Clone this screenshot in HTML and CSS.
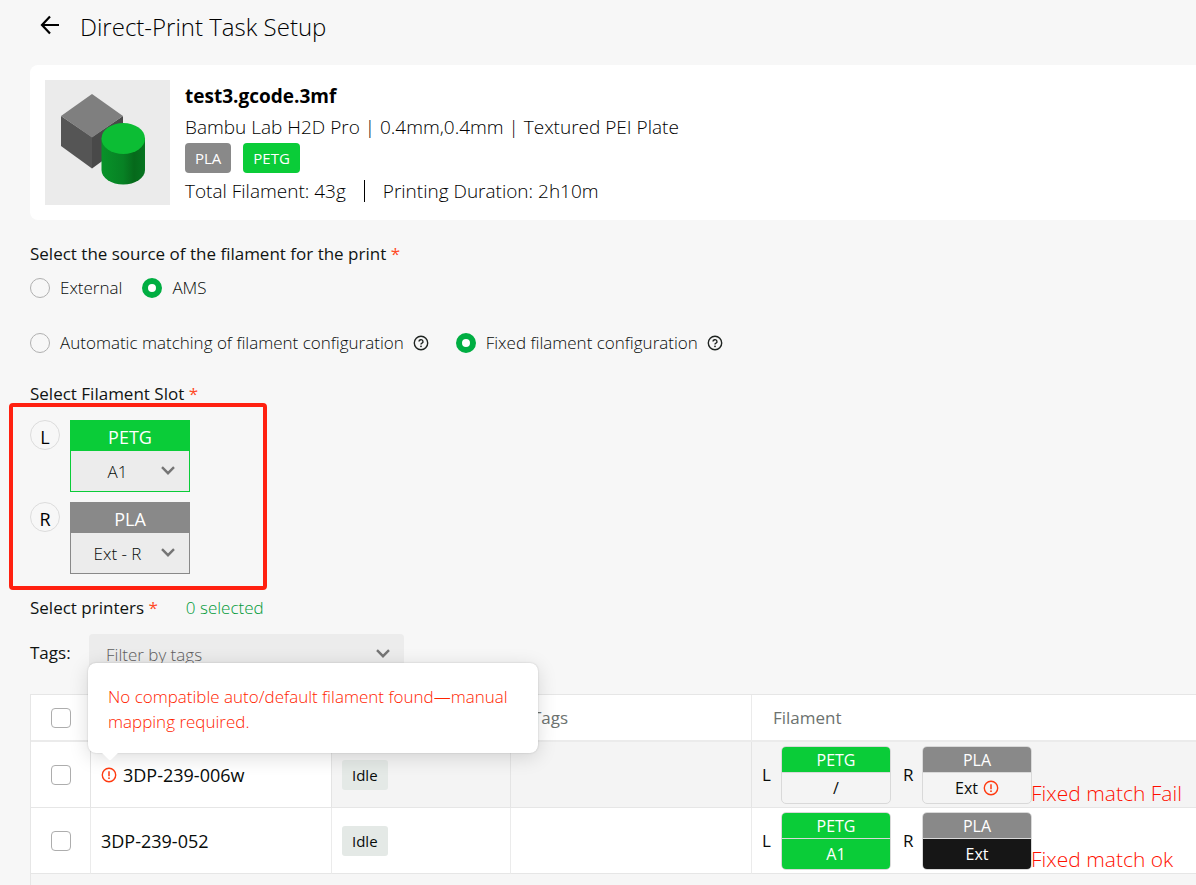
FILE: index.html
```html
<!DOCTYPE html>
<html lang="en">
<head>
<meta charset="utf-8">
<title>Direct-Print Task Setup</title>
<link rel="stylesheet" href="styles.css">
</head>
<body>
<svg class="defs" width="0" height="0" aria-hidden="true">
  <symbol id="chevron" viewBox="0 0 14 9"><path d="M1 1.200l6 6 6-6" fill="none" stroke="#757575" stroke-width="2.400"/></symbol>
  <symbol id="help" viewBox="0 0 16 16"><circle cx="8" cy="8" r="6.700" fill="none" stroke="#1f2421" stroke-width="1.400"/><path d="M6 6.600a2 1.900 0 1 1 3 1.600q-1 .5-1 1.300" fill="none" stroke="#1f2421" stroke-width="1.400"/><circle cx="8" cy="11.300" r=".9" fill="#1f2421"/></symbol>
  <symbol id="alert" viewBox="0 0 16 16"><circle cx="8" cy="8" r="6.700" fill="none" stroke="#ff3a10" stroke-width="1.400"/><path d="M8 4.200v5" stroke="#ff3a10" stroke-width="1.500"/><circle cx="8" cy="11.200" r=".9" fill="#ff3a10"/></symbol>
</svg>

<header class="header">
  <button class="back" aria-label="Back"><svg width="20" height="20" viewBox="0 0 20 20"><path d="M10 1.500L2 10l8 8.500M2 10h17" fill="none" stroke="#000" stroke-width="2.200"/></svg></button>
  <h1 class="title">Direct-Print Task Setup</h1>
</header>

<main class="main">
  <section class="card">
    <svg class="thumb" viewBox="0 0 125 125" aria-label="Model preview">
      <defs><linearGradient id="side"><stop offset="0" stop-color="#089229"/><stop offset=".5" stop-color="#078124"/><stop offset=".75" stop-color="#06691b"/><stop offset="1" stop-color="#067420"/></linearGradient></defs>
      <rect width="125" height="125" fill="#ebebeb"/>
      <path d="M16 36L47 57V88.500L16 66z" fill="#555"/>
      <path d="M47 57L78 36V66L47 88.500z" fill="#494949"/>
      <path d="M47 14L78 36 47 57.500 16 36z" fill="#7f7f7f"/>
      <path d="M56.500 58h43.500v32a21.750 14.500 0 0 1-43.500 0z" fill="url(#side)"/>
      <ellipse cx="78.250" cy="58.500" rx="21.750" ry="15.500" fill="#0cbd34"/>
    </svg>
    <div class="info">
      <h2 class="file">test3.gcode.3mf</h2>
      <p class="line">Bambu Lab H2D Pro | 0.4mm,0.4mm | Textured PEI Plate</p>
      <div class="chips"><span class="chip gray">PLA</span><span class="chip green">PETG</span></div>
      <p class="line totals"><span>Total Filament: 43g</span><span class="bar"></span><span>Printing Duration: 2h10m</span></p>
    </div>
  </section>

  <h3 class="label">Select the source of the filament for the print <span class="req">*</span></h3>
  <div class="radios source">
    <label class="radio"><input type="radio" name="source">External</label>
    <label class="radio"><input type="radio" name="source" checked>AMS</label>
  </div>
  <div class="radios config">
    <label class="radio"><input type="radio" name="config"><span class="with-help">Automatic matching of filament configuration<svg class="icon"><use href="#help"/></svg></span></label>
    <label class="radio"><input type="radio" name="config" checked><span class="with-help">Fixed filament configuration<svg class="icon"><use href="#help"/></svg></span></label>
  </div>

  <h3 class="label slot-label">Select Filament Slot <span class="req">*</span></h3>
  <div class="slots">
    <div class="slot">
      <span class="side">L</span>
      <div class="slot-box green-box">
        <label class="slot-name green" for="slot-l">PETG</label>
        <div class="pick"><select id="slot-l"><option>A1</option></select><svg class="chev"><use href="#chevron"/></svg></div>
      </div>
    </div>
    <div class="slot">
      <span class="side">R</span>
      <div class="slot-box gray-box">
        <label class="slot-name gray" for="slot-r">PLA</label>
        <div class="pick"><select id="slot-r"><option>Ext - R</option></select><svg class="chev"><use href="#chevron"/></svg></div>
      </div>
    </div>
    <div class="highlight"></div>
  </div>

  <div class="printers-head">
    <h3 class="label">Select printers <span class="req">*</span></h3>
    <span class="count">0 selected</span>
  </div>
  <div class="filter">
    <label class="label filter-label" for="tags">Tags:</label>
    <div class="pick tags"><select id="tags"><option>Filter by tags</option></select><svg class="chev"><use href="#chevron"/></svg></div>
  </div>

  <div class="table-wrap">
  <table class="table">
    <colgroup><col class="c-check"><col class="c-name"><col class="c-status"><col class="c-tags"><col></colgroup>
    <thead>
      <tr><th><input type="checkbox" aria-label="Select all"></th><th></th><th></th><th>Tags</th><th>Filament</th></tr>
    </thead>
    <tbody>
      <tr class="active">
        <td class="fixed"><input type="checkbox" aria-label="Select 3DP-239-006w"></td>
        <td class="fixed name">
          <div class="name-row"><svg class="icon"><use href="#alert"/></svg>3DP-239-006w
            <div class="popover" role="tooltip">No compatible auto/default filament found—manual mapping required.</div>
          </div>
        </td>
        <td class="status"><span class="badge">Idle</span></td>
        <td></td>
        <td class="fil"><div class="fils">
          <b class="pos">L</b>
          <div class="pair"><span class="green">PETG</span><span class="low">/</span></div>
          <b class="pos">R</b>
          <div class="pair"><span class="gray">PLA</span><span class="low">Ext<svg class="icon"><use href="#alert"/></svg></span></div>
          <span class="note">Fixed match Fail</span>
        </div></td>
      </tr>
      <tr>
        <td class="fixed"><input type="checkbox" aria-label="Select 3DP-239-052"></td>
        <td class="fixed name"><div class="name-row">3DP-239-052</div></td>
        <td class="status"><span class="badge">Idle</span></td>
        <td></td>
        <td class="fil"><div class="fils">
          <b class="pos">L</b>
          <div class="pair"><span class="green">PETG</span><span class="low green">A1</span></div>
          <b class="pos">R</b>
          <div class="pair"><span class="gray">PLA</span><span class="low black">Ext</span></div>
          <span class="note">Fixed match ok</span>
        </div></td>
      </tr>
    </tbody>
  </table>
  </div>
</main>
</body>
</html>
```

FILE: styles.css
```css
* { box-sizing: border-box; }
body {
  margin: 0;
  background: #f7f7f7;
  color: #080c0a;
  font: 300 17px/28px "Open Sans", "Noto Sans", sans-serif;
  overflow: hidden;
}
h1, h2, h3, p { margin: 0; }
input, select, button { font: inherit; color: inherit; margin: 0; }
.defs { position: absolute; }
.icon { width: 16px; height: 16px; flex: none; }
.green { background: #0acc38; color: #fff; }
.gray { background: #898989; color: #fff; }
.black { background: #161616; color: #fff; }

.header { display: flex; align-items: center; gap: 20px; height: 54px; padding-left: 40px; }
.back { width: 20px; height: 24px; padding: 0 0 4px; border: 0; background: none; line-height: 0; }
.title { color: #000; font-size: 24px; font-weight: 300; }

.main { padding: 11px 0 0 30px; }
.card { display: flex; gap: 15px; padding: 15px; background: #fff; border-radius: 8px 0 0 8px; }
.thumb { width: 125px; height: 125px; flex: none; }
.info { color: #000; font-size: 19px; }
.file { font-size: 19px; font-weight: 700; line-height: 32px; }
.line { line-height: 31px; }
.chips { display: flex; gap: 12px; }
.chip { height: 30px; padding: 0 10px; border-radius: 4px; font-size: 15px; font-weight: 400; line-height: 31px; }
.totals { display: flex; align-items: center; gap: 18px; margin-top: 4px; line-height: 28px; }
.bar { width: 1px; height: 22px; background: #000; }

.label { color: #101412; font-size: 17px; font-weight: 500; line-height: 28px; }
.card + .label { margin-top: 20px; }
.req { color: #ff4a26; font-weight: 400; }
.radios { display: flex; gap: 20px; }
.source { margin-top: 5px; }
.config { gap: 27px; margin-top: 25px; }
.radio { display: flex; align-items: center; gap: 10px; height: 30px; }
.with-help { display: flex; align-items: center; gap: 9px; }
input[type="radio"] { appearance: none; width: 20px; height: 20px; border: 1px solid #b0b0b0; border-radius: 50%; }
input[type="radio"]:checked { border: 6px solid #00ae42; background: #fff; }

.slot-label { margin-top: 22px; }
.slots { position: relative; display: flex; flex-direction: column; gap: 10px; width: 160px; margin-top: 12px; }
.highlight { position: absolute; inset: -17px -77px -16px -21px; border: 4px solid #ff2010; border-radius: 4px; pointer-events: none; }
.slot { display: flex; gap: 10px; }
.side { width: 30px; height: 30px; border: 1px solid #dcdcdc; border-radius: 50%; color: #000; font-size: 18px; font-weight: 400; line-height: 32px; text-align: center; }
.slot-box { flex: 1; border: 1px solid; }
.green-box { border-color: #0acc38; }
.gray-box { border-color: #898989; }
.slot-name { display: block; height: 30px; font-size: 18px; font-weight: 400; line-height: 32px; text-align: center; }
.pick { position: relative; height: 40px; background: #ececec; }
.pick select { appearance: none; width: 100%; height: 100%; padding: 2px 25px 0 0; border: 0; background: none; text-align-last: center; }
.chev { position: absolute; top: 15px; right: 14px; width: 14px; height: 9px; pointer-events: none; }

.printers-head { display: flex; gap: 28px; margin-top: 20px; }
.count { color: #009a38; }
.filter { display: flex; gap: 19px; margin-top: 12px; }
.filter-label { width: 40px; line-height: 38px; }
.tags { width: 315px; border-radius: 4px; }
.pick.tags select { padding-left: 17px; text-align-last: left; color: #606060; }

.table-wrap { margin-top: 20px; min-height: 200px; border-left: 1px solid #e6e6e6; background: #f6f6f6; }
.table { width: 100%; border-spacing: 0; table-layout: fixed; border-top: 1px solid #e6e6e6; }
.c-check { width: 60px; }
.c-name { width: 241px; }
.c-status { width: 179px; }
.c-tags { width: 241px; }
th { height: 47px; padding: 0 21px; background: #fff; border-right: 1px solid #ebebeb; border-bottom: 2px solid #ebebeb; color: #6c726f; font-weight: 500; text-align: left; }
td { height: 66px; padding: 0 10px; background: #fff; border-right: 1px solid #ebebeb; border-bottom: 1px solid #e6e6e6; }
th:last-child, td:last-child { border-right: 0; }
.active td { background: #f4f4f4; border-right-color: #e4e4e4; }
.active .fixed { background: #fff; }
th:first-child, td:first-child { padding: 0 0 0 20px; }
input[type="checkbox"] { appearance: none; display: block; width: 20px; height: 20px; border: 1px solid #adadad; border-radius: 4px; background: #fff; }
.name-row { position: relative; display: flex; align-items: center; gap: 6px; font-size: 18px; font-weight: 400; }
.popover { position: absolute; left: -13px; bottom: 36px; z-index: 2; width: 450px; padding: 21px 20px 19px; border-radius: 8px; background: #fff; box-shadow: 0 4px 20px rgba(0, 0, 0, .14), 0 0 2px rgba(0, 0, 0, .18); color: #ff2400; font-size: 17px; font-weight: 300; line-height: 25px; }
.popover::after { content: ""; position: absolute; left: 15px; bottom: -5px; width: 14px; height: 14px; background: #fff; border-radius: 2px; transform: rotate(45deg); }
.badge { display: inline-block; height: 30px; padding: 0 10px; border-radius: 3px; background: #e4e9e6; font-size: 15px; font-weight: 400; line-height: 31px; }
.fils { display: flex; align-items: center; white-space: nowrap; }
.pos { width: 19px; font-weight: 500; }
.pair { width: 110px; margin-right: 12px; border: 1px solid #d9d9d9; border-radius: 5px; overflow: hidden; font-size: 16px; font-weight: 400; text-align: center; }
.pair span { display: block; height: 25px; line-height: 27px; }
.pair .low { display: flex; justify-content: center; align-items: center; gap: 5px; height: 31px; border-top: 1px solid #d9d9d9; line-height: 30px; }
.note { align-self: flex-end; margin-left: -13px; color: #ff1000; font-size: 21px; line-height: 22px; }
```
